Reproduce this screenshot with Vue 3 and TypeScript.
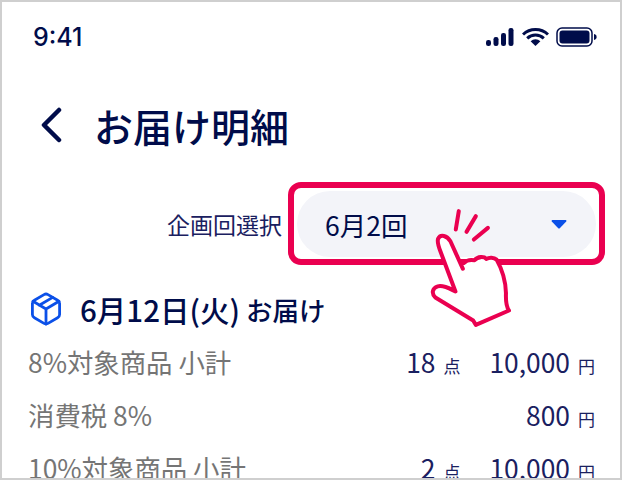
<template>
  <div class="frame">
    <div class="status">
      <span class="status__time">9:41</span>
      <div class="status__icons">
        <svg width="30" height="20" viewBox="0 0 30 20">
          <rect x="1" y="13" width="5" height="6" rx="2.2" />
          <rect x="8.500" y="10" width="5" height="9" rx="2.2" />
          <rect x="16" y="6" width="5" height="13" rx="2.2" />
          <rect x="23.500" y="1" width="5" height="18" rx="2.2" />
        </svg>
        <svg width="27" height="20" viewBox="0 0 27 20">
          <path d="M1 7.500a18 18 0 0 1 25 0M5.200 11.400a12 12 0 0 1 16.600 0" fill="none" stroke="#000c4a" stroke-width="3" />
          <path d="M8.600 14.200a7.200 7.200 0 0 1 9.800 0L13.500 19z" />
        </svg>
        <svg width="42" height="20" viewBox="0 0 42 20">
          <rect x="1" y="1" width="35" height="18" rx="5" fill="none" stroke="#000c4a" stroke-width="1.500" />
          <rect x="3.500" y="3.500" width="30" height="13" rx="3" />
          <path d="M38 7c2 .4 2.600 1.600 2.600 3s-.6 2.600-2.600 3z" />
        </svg>
      </div>
    </div>

    <header class="title">
      <svg class="title__back" width="22" height="36" viewBox="0 0 22 36">
        <path d="M19 3 4 18l15 15" fill="none" stroke="#000c4a" stroke-width="4.500" stroke-linecap="round" stroke-linejoin="round" />
      </svg>
      <h1>お届け明細</h1>
    </header>

    <div class="picker">
      <span class="picker__label">企画回選択</span>
      <div class="picker__box">
        <div class="picker__select">
          <span>{{ selected }}</span>
          <svg width="16" height="10" viewBox="0 0 16 10">
            <path d="M1.500 1h13c.8 0 1.200.9.700 1.500L9 9a1.400 1.400 0 0 1-2 0L.8 2.500C.3 1.900.7 1 1.500 1z" fill="#0b50e8" />
          </svg>
        </div>
        <svg class="picker__hand" width="87" height="124" viewBox="80 110 260 370">
          <g fill="none" stroke="#ea0050" stroke-width="12" stroke-linecap="round" stroke-linejoin="round">
            <path d="M175 125 166 180M226 140 198 187M262 175 220 210" />
            <path
              d="M187 297 150 215C140 198 120 192 113 208 110 218 115 232 120 245L165 365C150 358 130 345 112 350 95 355 93 372 105 383L218 452 226 465 325 422C316 410 315 395 316 370 315 330 305 300 288 270 280 263 265 263 258 268 250 260 232 260 222 272 212 270 198 272 190 280"
              fill="#fff"
            />
          </g>
        </svg>
      </div>
    </div>

    <section class="delivery">
      <h2 class="delivery__head">
        <svg width="32" height="34" viewBox="0 0 32 34">
          <g fill="none" stroke="#0b50e8" stroke-width="2.800" stroke-linejoin="round" stroke-linecap="round">
            <path d="M14 2.600a4 4 0 0 1 4 0l9.600 5.600a4 4 0 0 1 2 3.400v10.800a4 4 0 0 1-2 3.400L18 31.400a4 4 0 0 1-4 0l-9.600-5.600a4 4 0 0 1-2-3.400V11.600a4 4 0 0 1 2-3.400z" />
            <path d="M3 9.300 16 17l13-7.700M16 17v15M9.300 13.300 22.700 5.400" />
          </g>
        </svg>
        <strong>6月12日(火)</strong>
        <span>お届け</span>
      </h2>
      <div v-for="row in rows" :key="row.label" class="row">
        <span class="row__label">{{ row.label }}</span>
        <span v-if="row.count" class="row__count">{{ row.count }}<small>点</small></span>
        <span class="row__price">{{ row.price }}<small>円</small></span>
      </div>
    </section>
  </div>
</template>

<script setup lang="ts">
type Row = {
  label: string
  count?: string
  price: string
}

const selected = '6月2回'

const rows: Row[] = [
  { label: '8%対象商品 小計', count: '18', price: '10,000' },
  { label: '消費税 8%', price: '800' },
  { label: '10%対象商品 小計', count: '2', price: '10,000' }
]
</script>

<style>
html,
body {
  margin: 0;
  background: #fff;
}
</style>

<style scoped>
.frame {
  box-sizing: border-box;
  width: 622px;
  height: 480px;
  overflow: hidden;
  border: 2px solid #cfcfcf;
  background: #fff;
  color: #000c4a;
  font-family: "Noto Sans CJK JP", "Noto Sans", sans-serif;
}

.status {
  display: flex;
  align-items: center;
  justify-content: space-between;
  height: 34px;
  margin-top: 18px;
  padding: 0 22px 0 31px;
}

.status__time {
  font-family: Inter, sans-serif;
  font-size: 25px;
  font-weight: 500;
}

.status__icons {
  display: flex;
  align-items: center;
  gap: 7px;
  fill: #000c4a;
}

.title {
  display: flex;
  align-items: center;
  height: 44px;
  margin-top: 49px;
  padding-left: 38px;
}

.title h1 {
  margin: 0 0 0 32px;
  font-size: 39px;
  font-weight: 500;
  line-height: 44px;
}

.picker {
  display: flex;
  align-items: center;
  justify-content: flex-end;
  gap: 6px;
  margin-top: 35px;
  padding-right: 15px;
  color: #1a2060;
  font-size: 23px;
}

.picker__box {
  position: relative;
  box-sizing: border-box;
  width: 317px;
  height: 83px;
  padding: 3px;
  border: 6px solid #ea0050;
  border-radius: 13px;
}

.picker__select {
  display: flex;
  align-items: center;
  justify-content: space-between;
  height: 66px;
  padding: 0 29px 0 28px;
  border-radius: 33px;
  background: #f3f4f9;
  color: #000c4a;
  font-size: 26.5px;
}

.picker__hand {
  position: absolute;
  left: 133px;
  top: 18px;
}

.delivery {
  margin-top: 27px;
  padding: 0 25px 0 26px;
}

.delivery__head {
  display: flex;
  align-items: center;
  height: 34px;
  margin: 0;
  font-size: 26.5px;
  font-weight: 500;
}

.delivery__head svg {
  margin: 0 18px 0 2px;
}

.delivery__head strong {
  margin-right: 6px;
  font-size: 29.5px;
  font-weight: 500;
}

.row {
  display: flex;
  align-items: center;
  height: 53px;
  color: #1a2060;
  font-size: 26.4px;
}

.row:first-of-type {
  margin-top: 9px;
}

.row__label {
  margin-right: auto;
  color: #757575;
}

.row__count {
  margin-right: 29px;
}

.row small {
  margin-left: 8px;
  font-size: 17px;
}
</style>
